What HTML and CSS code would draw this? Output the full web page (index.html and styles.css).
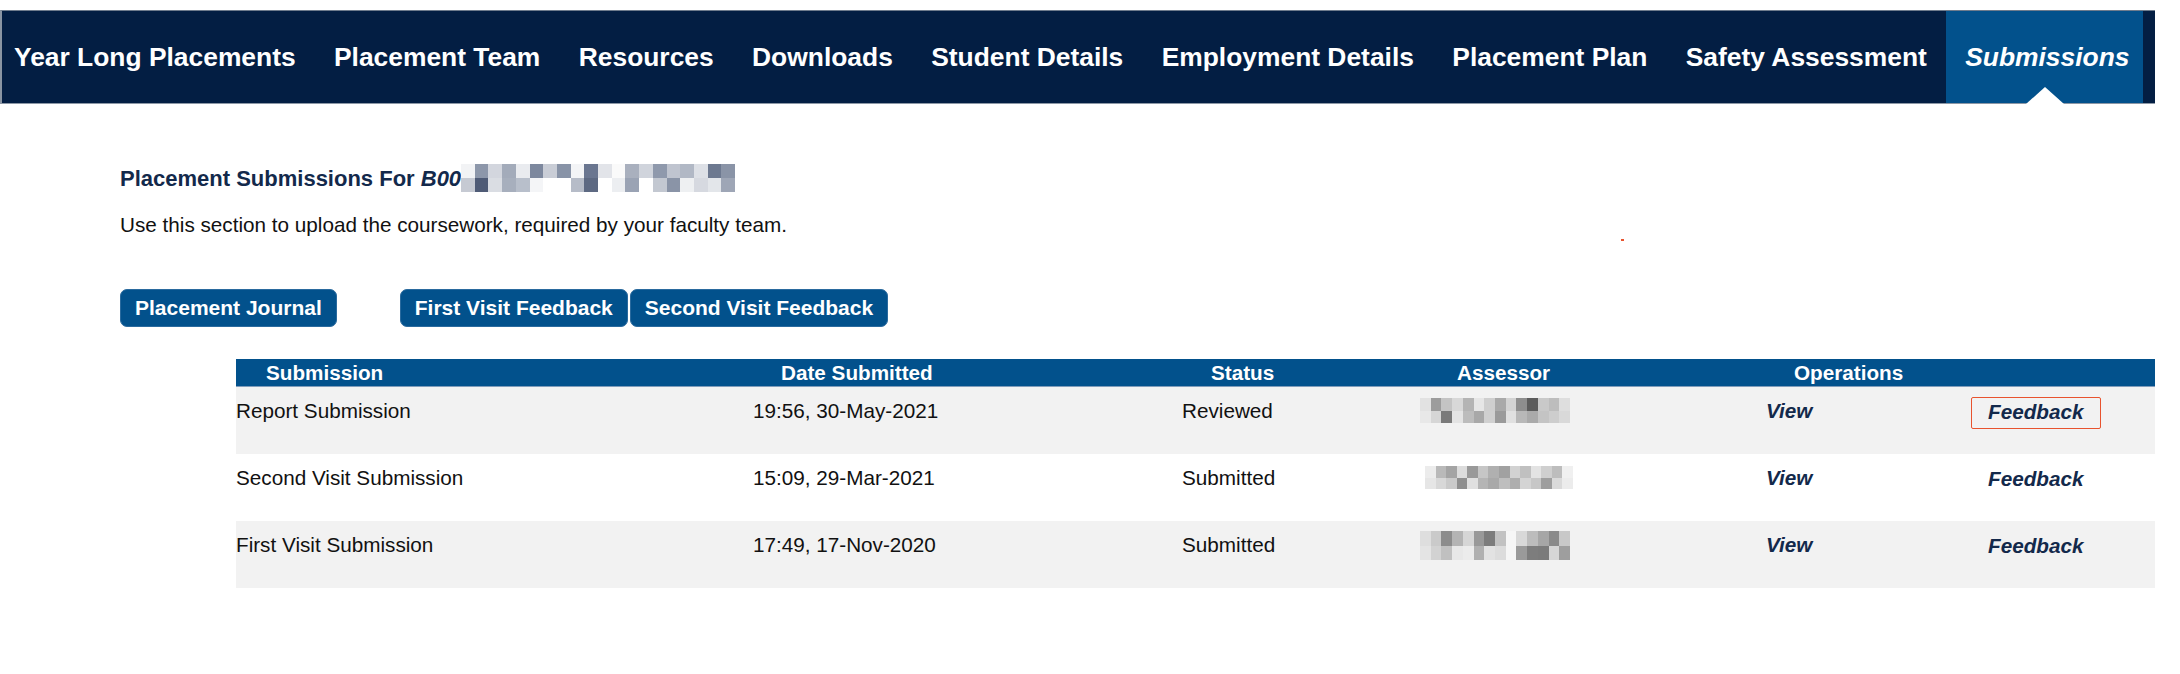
FILE: index.html
```html
<!DOCTYPE html>
<html lang="en">
<head>
<meta charset="utf-8">
<title>Placement Submissions</title>
<link rel="stylesheet" href="styles.css">
</head>
<body>
<div class="page">
  <nav class="nav">
    <ul class="nav-list">
      <li class="nav-item"><a href="#">Year Long Placements</a></li>
      <li class="nav-item"><a href="#">Placement Team</a></li>
      <li class="nav-item"><a href="#">Resources</a></li>
      <li class="nav-item"><a href="#">Downloads</a></li>
      <li class="nav-item"><a href="#">Student Details</a></li>
      <li class="nav-item"><a href="#">Employment Details</a></li>
      <li class="nav-item"><a href="#">Placement Plan</a></li>
      <li class="nav-item"><a href="#">Safety Assessment</a></li>
      <li class="nav-item active"><a href="#">Submissions</a></li>
    </ul>
  </nav>

  <main class="content">
    <span class="dot"></span>
    <h1 class="title">Placement Submissions For <em>B00</em><svg class="mosaic" width="274" height="28" viewBox="0 0 20 2" preserveAspectRatio="none" shape-rendering="crispEdges">
      <rect x="0" y="0" width="1" height="1" fill="#f2f3f5"/><rect x="1" y="0" width="1" height="1" fill="#8d97aa"/><rect x="2" y="0" width="1" height="1" fill="#d3d6de"/><rect x="3" y="0" width="1" height="1" fill="#a3abba"/><rect x="4" y="0" width="1" height="1" fill="#e9ebef"/><rect x="5" y="0" width="1" height="1" fill="#7d889e"/><rect x="6" y="0" width="1" height="1" fill="#c9cdd6"/><rect x="7" y="0" width="1" height="1" fill="#8893a7"/><rect x="8" y="0" width="1" height="1" fill="#f3f4f6"/><rect x="9" y="0" width="1" height="1" fill="#6a7690"/><rect x="10" y="0" width="1" height="1" fill="#e2e4e9"/><rect x="11" y="0" width="1" height="1" fill="#fafafa"/><rect x="12" y="0" width="1" height="1" fill="#a9b0be"/><rect x="13" y="0" width="1" height="1" fill="#d0d4dc"/><rect x="14" y="0" width="1" height="1" fill="#8f99ac"/><rect x="15" y="0" width="1" height="1" fill="#bfc4cf"/><rect x="16" y="0" width="1" height="1" fill="#b1b8c5"/><rect x="17" y="0" width="1" height="1" fill="#dde0e6"/><rect x="18" y="0" width="1" height="1" fill="#6d7990"/><rect x="19" y="0" width="1" height="1" fill="#8a94a7"/>
      <rect x="0" y="1" width="1" height="1" fill="#c6cad3"/><rect x="1" y="1" width="1" height="1" fill="#4f5b76"/><rect x="2" y="1" width="1" height="1" fill="#dadde3"/><rect x="3" y="1" width="1" height="1" fill="#a7afbd"/><rect x="4" y="1" width="1" height="1" fill="#b8bfcb"/><rect x="5" y="1" width="1" height="1" fill="#f4f5f7"/><rect x="6" y="1" width="1" height="1" fill="#ffffff"/><rect x="7" y="1" width="1" height="1" fill="#ffffff"/><rect x="8" y="1" width="1" height="1" fill="#b6bcc8"/><rect x="9" y="1" width="1" height="1" fill="#5d6982"/><rect x="10" y="1" width="1" height="1" fill="#ffffff"/><rect x="11" y="1" width="1" height="1" fill="#eceef1"/><rect x="12" y="1" width="1" height="1" fill="#9aa3b4"/><rect x="13" y="1" width="1" height="1" fill="#ffffff"/><rect x="14" y="1" width="1" height="1" fill="#c3c8d1"/><rect x="15" y="1" width="1" height="1" fill="#8a94a7"/><rect x="16" y="1" width="1" height="1" fill="#eef0f2"/><rect x="17" y="1" width="1" height="1" fill="#d6d9e0"/><rect x="18" y="1" width="1" height="1" fill="#e3e6ea"/><rect x="19" y="1" width="1" height="1" fill="#9ea6b6"/>
    </svg></h1>
    <p class="lead">Use this section to upload the coursework, required by your faculty team.</p>

    <div class="actions">
      <a class="btn btn-journal" href="#">Placement Journal</a>
      <span class="btn-group"><a class="btn" href="#">First Visit Feedback</a><a class="btn" href="#">Second Visit Feedback</a></span>
    </div>

    <div class="table">
      <div class="thead">
        <div class="th th-first">Submission</div>
        <div class="th">Date Submitted</div>
        <div class="th">Status</div>
        <div class="th">Assessor</div>
        <div class="th">Operations</div>
      </div>

      <div class="row shaded">
        <div class="td">Report Submission</div>
        <div class="td">19:56, 30-May-2021</div>
        <div class="td">Reviewed</div>
        <div class="td"><svg class="blur" width="150" height="25" viewBox="0 0 14 2" preserveAspectRatio="none" shape-rendering="crispEdges">
          <rect x="0" y="0" width="1" height="1" fill="#e2e2e2"/><rect x="1" y="0" width="1" height="1" fill="#9c9c9c"/><rect x="2" y="0" width="1" height="1" fill="#c4c4c4"/><rect x="3" y="0" width="1" height="1" fill="#d8d8d8"/><rect x="4" y="0" width="1" height="1" fill="#b4b4b4"/><rect x="5" y="0" width="1" height="1" fill="#e6e6e6"/><rect x="6" y="0" width="1" height="1" fill="#cfcfcf"/><rect x="7" y="0" width="1" height="1" fill="#a9a9a9"/><rect x="8" y="0" width="1" height="1" fill="#d3d3d3"/><rect x="9" y="0" width="1" height="1" fill="#8e8e8e"/><rect x="10" y="0" width="1" height="1" fill="#5c5c5c"/><rect x="11" y="0" width="1" height="1" fill="#c9c9c9"/><rect x="12" y="0" width="1" height="1" fill="#bdbdbd"/><rect x="13" y="0" width="1" height="1" fill="#dedede"/>
          <rect x="0" y="1" width="1" height="1" fill="#e8e8e8"/><rect x="1" y="1" width="1" height="1" fill="#d6d6d6"/><rect x="2" y="1" width="1" height="1" fill="#7a7a7a"/><rect x="3" y="1" width="1" height="1" fill="#e4e4e4"/><rect x="4" y="1" width="1" height="1" fill="#bcbcbc"/><rect x="5" y="1" width="1" height="1" fill="#a8a8a8"/><rect x="6" y="1" width="1" height="1" fill="#d0d0d0"/><rect x="7" y="1" width="1" height="1" fill="#9a9a9a"/><rect x="8" y="1" width="1" height="1" fill="#e0e0e0"/><rect x="9" y="1" width="1" height="1" fill="#b8b8b8"/><rect x="10" y="1" width="1" height="1" fill="#aaaaaa"/><rect x="11" y="1" width="1" height="1" fill="#c4c4c4"/><rect x="12" y="1" width="1" height="1" fill="#cdcdcd"/><rect x="13" y="1" width="1" height="1" fill="#d9d9d9"/>
        </svg></div>
        <div class="td"><a class="op" href="#">View</a></div>
        <div class="td"><a class="op op-feedback focused" href="#">Feedback</a></div>
      </div>

      <div class="row">
        <div class="td">Second Visit Submission</div>
        <div class="td">15:09, 29-Mar-2021</div>
        <div class="td">Submitted</div>
        <div class="td"><svg class="blur blur-2" width="148" height="23" viewBox="0 0 14 2" preserveAspectRatio="none" shape-rendering="crispEdges">
          <rect x="0" y="0" width="1" height="1" fill="#ececec"/><rect x="1" y="0" width="1" height="1" fill="#b9b9b9"/><rect x="2" y="0" width="1" height="1" fill="#a4a4a4"/><rect x="3" y="0" width="1" height="1" fill="#dcdcdc"/><rect x="4" y="0" width="1" height="1" fill="#999999"/><rect x="5" y="0" width="1" height="1" fill="#c6c6c6"/><rect x="6" y="0" width="1" height="1" fill="#b0b0b0"/><rect x="7" y="0" width="1" height="1" fill="#a1a1a1"/><rect x="8" y="0" width="1" height="1" fill="#d2d2d2"/><rect x="9" y="0" width="1" height="1" fill="#c0c0c0"/><rect x="10" y="0" width="1" height="1" fill="#e3e3e3"/><rect x="11" y="0" width="1" height="1" fill="#cfcfcf"/><rect x="12" y="0" width="1" height="1" fill="#bdbdbd"/><rect x="13" y="0" width="1" height="1" fill="#f0f0f0"/>
          <rect x="0" y="1" width="1" height="1" fill="#e6e6e6"/><rect x="1" y="1" width="1" height="1" fill="#d8d8d8"/><rect x="2" y="1" width="1" height="1" fill="#cacaca"/><rect x="3" y="1" width="1" height="1" fill="#8f8f8f"/><rect x="4" y="1" width="1" height="1" fill="#e0e0e0"/><rect x="5" y="1" width="1" height="1" fill="#b5b5b5"/><rect x="6" y="1" width="1" height="1" fill="#a9a9a9"/><rect x="7" y="1" width="1" height="1" fill="#bebebe"/><rect x="8" y="1" width="1" height="1" fill="#aeaeae"/><rect x="9" y="1" width="1" height="1" fill="#d4d4d4"/><rect x="10" y="1" width="1" height="1" fill="#c7c7c7"/><rect x="11" y="1" width="1" height="1" fill="#9e9e9e"/><rect x="12" y="1" width="1" height="1" fill="#dadada"/><rect x="13" y="1" width="1" height="1" fill="#ececec"/>
        </svg></div>
        <div class="td"><a class="op" href="#">View</a></div>
        <div class="td"><a class="op op-feedback" href="#">Feedback</a></div>
      </div>

      <div class="row shaded">
        <div class="td">First Visit Submission</div>
        <div class="td">17:49, 17-Nov-2020</div>
        <div class="td">Submitted</div>
        <div class="td"><svg class="blur blur-3" width="150" height="29" viewBox="0 0 14 2" preserveAspectRatio="none" shape-rendering="crispEdges">
          <rect x="0" y="0" width="1" height="1" fill="#dedede"/><rect x="1" y="0" width="1" height="1" fill="#cacaca"/><rect x="2" y="0" width="1" height="1" fill="#8c8c8c"/><rect x="3" y="0" width="1" height="1" fill="#b4b4b4"/><rect x="4" y="0" width="1" height="1" fill="#d6d6d6"/><rect x="5" y="0" width="1" height="1" fill="#999999"/><rect x="6" y="0" width="1" height="1" fill="#7c7c7c"/><rect x="7" y="0" width="1" height="1" fill="#c2c2c2"/><rect x="8" y="0" width="1" height="1" fill="#f6f6f6"/><rect x="9" y="0" width="1" height="1" fill="#d8d8d8"/><rect x="10" y="0" width="1" height="1" fill="#bcbcbc"/><rect x="11" y="0" width="1" height="1" fill="#a6a6a6"/><rect x="12" y="0" width="1" height="1" fill="#8a8a8a"/><rect x="13" y="0" width="1" height="1" fill="#c8c8c8"/>
          <rect x="0" y="1" width="1" height="1" fill="#e4e4e4"/><rect x="1" y="1" width="1" height="1" fill="#d2d2d2"/><rect x="2" y="1" width="1" height="1" fill="#c0c0c0"/><rect x="3" y="1" width="1" height="1" fill="#e8e8e8"/><rect x="4" y="1" width="1" height="1" fill="#ececec"/><rect x="5" y="1" width="1" height="1" fill="#b0b0b0"/><rect x="6" y="1" width="1" height="1" fill="#e2e2e2"/><rect x="7" y="1" width="1" height="1" fill="#dcdcdc"/><rect x="8" y="1" width="1" height="1" fill="#f6f6f6"/><rect x="9" y="1" width="1" height="1" fill="#9a9a9a"/><rect x="10" y="1" width="1" height="1" fill="#7d7d7d"/><rect x="11" y="1" width="1" height="1" fill="#7b7b7b"/><rect x="12" y="1" width="1" height="1" fill="#d6d6d6"/><rect x="13" y="1" width="1" height="1" fill="#9e9e9e"/>
        </svg></div>
        <div class="td"><a class="op" href="#">View</a></div>
        <div class="td"><a class="op op-feedback" href="#">Feedback</a></div>
      </div>
    </div>
  </main>
</div>
</body>
</html>
```

FILE: styles.css
```css
* {
  box-sizing: border-box;
}

html, body {
  margin: 0;
  padding: 0;
  background: #ffffff;
}

body {
  font-family: "Liberation Sans", Arial, Helvetica, sans-serif;
  color: #111111;
}

a {
  text-decoration: none;
}

.page {
  width: 2155px;
  padding-top: 10px;
}

/* ---------- Navigation ---------- */
.nav {
  background: #031e43;
  border-top: 1px solid #6f7c8d;
  border-bottom: 1px solid #8d98a6;
  border-left: 2px solid #8a95a3;
  height: 94px;
}

.nav-list {
  list-style: none;
  margin: 0;
  padding: 0;
  display: flex;
  height: 100%;
}

.nav-item {
  display: flex;
  align-items: center;
  padding: 0 19.2px;
  position: relative;
}

.nav-item:first-child {
  padding-left: 12px;
}

.nav-item a {
  color: #ffffff;
  font-size: 26.4px;
  font-weight: bold;
  line-height: 30px;
  white-space: nowrap;
}

.nav-item.active {
  background: #02518c;
  padding-right: 14px;
}

.nav-item.active a {
  font-style: italic;
}

.nav-item.active::after {
  content: "";
  position: absolute;
  left: 50%;
  bottom: -1px;
  margin-left: -19px;
  border-left: 19px solid transparent;
  border-right: 19px solid transparent;
  border-bottom: 17px solid #ffffff;
}

/* ---------- Content ---------- */
.content {
  position: relative;
  padding: 60px 0 0 120px;
}

.dot {
  position: absolute;
  left: 1621px;
  top: 135px;
  width: 3px;
  height: 2px;
  background: #e8532e;
}

.title {
  margin: 0;
  font-size: 22px;
  line-height: 28px;
  font-weight: bold;
  color: #13294b;
  white-space: nowrap;
}

.title em {
  font-style: italic;
}

.mosaic {
  vertical-align: -6px;
}

.lead {
  margin: 20px 0 0;
  font-size: 20.7px;
  line-height: 24px;
  color: #111111;
}

.actions {
  margin-top: 52px;
  display: flex;
  align-items: center;
}

.btn-group {
  display: flex;
  gap: 2px;
  margin-left: 63px;
}

.btn {
  display: block;
  background: #02518c;
  border: 1px solid #2a6a9e;
  border-radius: 7px;
  color: #ffffff;
  font-size: 21px;
  font-weight: bold;
  line-height: 24px;
  padding: 6px 14px;
  white-space: nowrap;
}

/* ---------- Table ---------- */
.table {
  margin: 32px 0 0 116px;
  width: 1919px;
}

.thead {
  display: grid;
  grid-template-columns: 545px 430px 246px 337px 1fr;
  background: #02518c;
  height: 28px;
  border-bottom: 1px solid #7f9cbb;
}

.th {
  color: #ffffff;
  font-size: 20.7px;
  font-weight: bold;
  line-height: 27px;
  white-space: nowrap;
}

.th-first {
  padding-left: 30px;
}

.row {
  display: grid;
  grid-template-columns: 517px 429px 238px 346px 205px 1fr;
  min-height: 67px;
  background: #ffffff;
}

.row.shaded {
  background: #f2f2f2;
}

.td {
  padding-top: 12px;
  font-size: 20.7px;
  line-height: 24px;
  color: #111111;
  white-space: nowrap;
}

.blur {
  display: block;
  margin-top: -1px;
}

.blur-2 {
  margin-left: 5px;
  margin-top: 0;
}

.blur-3 {
  margin-top: -2px;
}

.op {
  display: block;
  width: fit-content;
  color: #13294b;
  font-weight: bold;
  font-style: italic;
}

.op-feedback {
  margin-top: -2px;
  padding: 2px 17px 4px 16px;
  border: 1px solid transparent;
  border-radius: 2px;
}

.op-feedback.focused {
  border-color: #e8532e;
}
```
